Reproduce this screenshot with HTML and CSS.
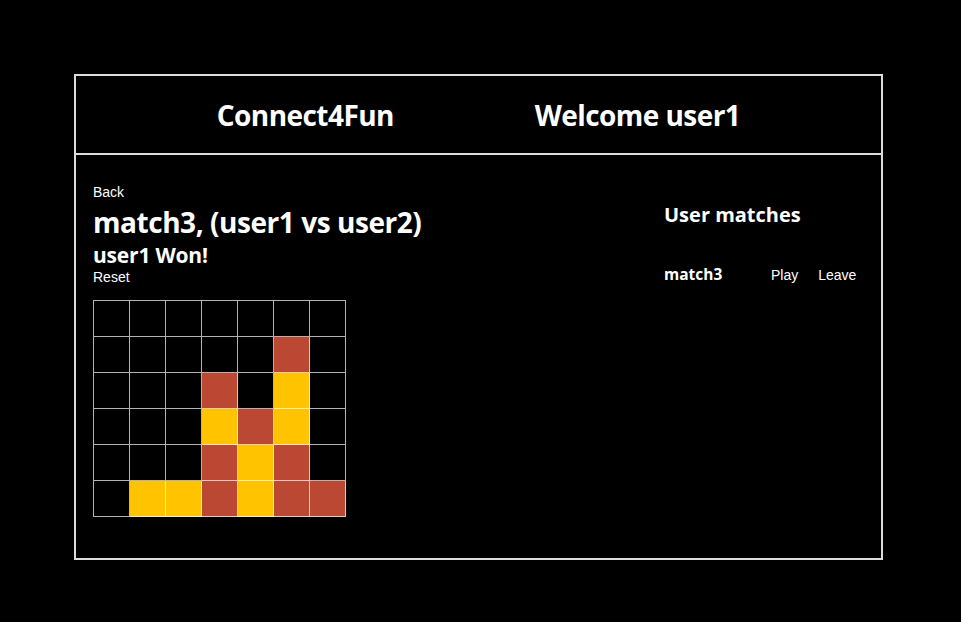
FILE: index.html
```html
<!DOCTYPE html>
<html>
<head>
<meta charset="utf-8">
<link rel="stylesheet" href="styles.css">
</head>
<body>
<div class="app">
  <header class="top">
    <h1 class="brand">Connect4Fun</h1>
    <h1 class="welcome">Welcome user1</h1>
  </header>
  <main class="content">
    <section class="game">
      <a class="link">Back</a>
      <h2 class="title">match3, (user1 vs user2)</h2>
      <h3 class="status">user1 Won!</h3>
      <a class="link">Reset</a>
      <div class="board">
        <div class="cell"></div><div class="cell"></div><div class="cell"></div><div class="cell"></div><div class="cell"></div><div class="cell"></div><div class="cell"></div>
        <div class="cell"></div><div class="cell"></div><div class="cell"></div><div class="cell"></div><div class="cell"></div><div class="cell red"></div><div class="cell"></div>
        <div class="cell"></div><div class="cell"></div><div class="cell"></div><div class="cell red"></div><div class="cell"></div><div class="cell yellow"></div><div class="cell"></div>
        <div class="cell"></div><div class="cell"></div><div class="cell"></div><div class="cell yellow"></div><div class="cell red"></div><div class="cell yellow"></div><div class="cell"></div>
        <div class="cell"></div><div class="cell"></div><div class="cell"></div><div class="cell red"></div><div class="cell yellow"></div><div class="cell red"></div><div class="cell"></div>
        <div class="cell"></div><div class="cell yellow"></div><div class="cell yellow"></div><div class="cell red"></div><div class="cell yellow"></div><div class="cell red"></div><div class="cell red"></div>
      </div>
    </section>
    <aside class="matches">
      <h3 class="matches-title">User matches</h3>
      <div class="match-row">
        <span class="match-name">match3</span>
        <a class="link">Play</a>
        <a class="link">Leave</a>
      </div>
    </aside>
  </main>
</div>
</body>
</html>
```

FILE: styles.css
```css
html, body {
  margin: 0;
  padding: 0;
  background: #000;
  color: #fff;
}
body {
  padding: 74px 0 0 74px;
  font-family: "Liberation Sans", Arial, sans-serif;
}
.app {
  width: 805px;
  height: 482px;
  border: 2px solid #dcdcdc;
  display: flex;
  flex-direction: column;
}
.top {
  height: 77px;
  border-bottom: 2px solid #dcdcdc;
  display: flex;
  justify-content: space-evenly;
  align-items: center;
}
.brand, .welcome {
  margin: 0;
  font-family: "Open Sans", sans-serif;
  font-weight: 700;
  font-size: 28px;
  letter-spacing: -0.55px;
}
.content {
  flex: 1;
  display: flex;
  justify-content: space-between;
  padding: 29px 22px 0 17px;
}
.game {
  display: flex;
  flex-direction: column;
  align-items: flex-start;
}
.link {
  font-size: 14px;
  line-height: 17px;
  color: #fff;
}
.title {
  margin: 2px 0 0;
  font-family: "Open Sans", sans-serif;
  font-weight: 700;
  font-size: 28px;
  line-height: 38px;
  letter-spacing: -0.45px;
}
.status {
  margin: 0;
  font-family: "Open Sans", sans-serif;
  font-weight: 700;
  font-size: 21px;
  line-height: 28px;
  letter-spacing: -0.2px;
}
.board {
  margin-top: 14px;
  display: grid;
  grid-template-columns: repeat(7, 36px);
  grid-auto-rows: 36px;
  border-top: 1px solid rgba(255,255,255,0.7);
  border-left: 1px solid rgba(255,255,255,0.7);
}
.cell {
  border-right: 1px solid rgba(255,255,255,0.7);
  border-bottom: 1px solid rgba(255,255,255,0.7);
  background: #000;
}
.cell.red { background: #bb4833; }
.cell.yellow { background: #ffc300; }
.matches {
  width: 195px;
  padding-top: 18px;
}
.matches-title {
  margin: 0;
  font-family: "Open Sans", sans-serif;
  font-weight: 700;
  font-size: 20px;
  line-height: 26px;
}
.match-row {
  margin-top: 35px;
  display: flex;
  align-items: baseline;
}
.match-name {
  font-family: "Open Sans", sans-serif;
  font-weight: 700;
  font-size: 15.5px;
  width: 107px;
}
.match-row .link + .link {
  margin-left: 20px;
}
```
